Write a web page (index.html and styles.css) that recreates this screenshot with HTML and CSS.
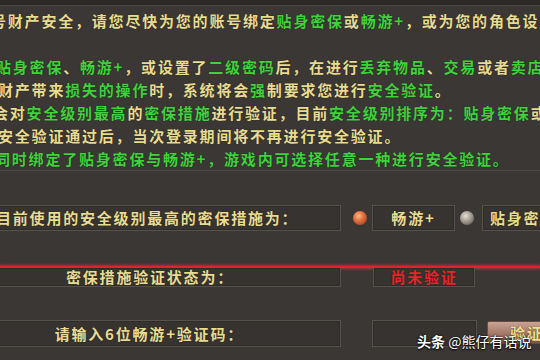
FILE: index.html
```html
<!DOCTYPE html>
<html lang="zh-CN">
<head>
<meta charset="utf-8">
<title>安全验证</title>
<link rel="stylesheet" href="styles.css">
</head>
<body>
<div class="screen">
  <div class="topbar"></div>
  <div class="notice">
    <p class="ln l1">号财产安全，请您尽快为您的账号绑定<span class="g">贴身密保</span>或<span class="g">畅游+</span>，或为您的角色设置</p>
    <p class="ln blank"></p>
    <p class="ln l2"><span class="g">贴身密保</span>、<span class="g">畅游+</span>，或设置了<span class="g">二级密码</span>后，在进行<span class="g">丢弃物品</span>、<span class="g">交易</span>或者<span class="g">卖店</span>等</p>
    <p class="ln l3">财产带来<span class="g">损失的操作</span>时，系统将会<span class="g">强</span>制要求您进行<span class="g">安全验证</span>。</p>
    <p class="ln l4">会对<span class="g">安全级别最高</span>的<span class="g">密保措施</span>进行验证，目前<span class="g">安全级别排序为：贴身密保</span>或</p>
    <p class="ln l5">安全验证通过后，当次登录期间将不再进行安全验证。</p>
    <p class="ln l6 g">同时绑定了贴身密保与畅游+，游戏内可选择任意一种进行安全验证。</p>
  </div>
  <div class="divider"></div>
  <div class="form">
    <div class="row r1">
      <div class="field wide label-left">目前使用的安全级别最高的密保措施为：</div>
      <span class="ball orange"></span>
      <div class="field opt">畅游+</div>
      <span class="ball gray"></span>
      <div class="field opt2">贴身密保</div>
    </div>
    <div class="redline"></div>
    <div class="row r2">
      <div class="field wide label-right notop">密保措施验证状态为：</div>
      <div class="field status notop">尚未验证</div>
    </div>
    <div class="row r3">
      <div class="field wide label-right">请输入6位畅游+验证码：</div>
      <div class="field input"></div>
      <div class="btn">验证</div>
    </div>
  </div>
  <div class="watermark"><b>头条</b> @熊仔有话说</div>
</div>
</body>
</html>
```

FILE: styles.css
```css
html, body {
  margin: 0;
  padding: 0;
  background: #3b3735;
}

.screen {
  position: relative;
  width: 540px;
  height: 360px;
  overflow: hidden;
  background: #3b3735;
  font-family: "Noto Sans CJK SC", "Noto Sans", sans-serif;
  color: #e8dc90;
}

.topbar {
  height: 5px;
  background: #2c2a29;
  border-bottom: 1px solid #4a4643;
}

.notice {
  padding-top: 3px;
}

.ln {
  margin: 0;
  height: 23px;
  line-height: 23px;
  white-space: nowrap;
  font-size: 15px;
  font-weight: 700;
  letter-spacing: 1.8px;
  color: #e8dc90;
  text-shadow: 0 0 1px #1a1816;
}

.g {
  color: #3fd23b;
}

.l1 { margin-left: -9px; }
.l2 { margin-left: -4px; }
.l3 { margin-left: -2px; }
.l4 { margin-left: -7px; }
.l5 { margin-left: -2px; }
.l6 { margin-left: -5px; }

.divider {
  height: 1px;
  background: #4d4946;
}

.form {
  margin-top: 34px;
}

.row {
  display: flex;
  align-items: center;
}

.field {
  flex: none;
  box-sizing: border-box;
  border: 1px solid #57514c;
  background: #373331;
  box-shadow: inset 0 0 0 1px #2f2c2a;
  font-size: 15px;
  font-weight: 700;
  letter-spacing: 1.8px;
  white-space: nowrap;
  overflow: hidden;
  color: #e8dc90;
  text-shadow: 0 0 1px #1a1816;
}

.notop {
  border-top: none;
}

.r1 {
  height: 26px;
}

.r1 .field {
  height: 26px;
  line-height: 24px;
}

.wide {
  margin-left: -10px;
  width: 351px;
}

.label-left {
  padding-left: 5px;
}

.label-right {
  text-align: right;
}

.r2 .label-right {
  padding-right: 106px;
}

.r3 .label-right {
  padding-right: 96px;
}

.ball {
  width: 14px;
  height: 14px;
  border-radius: 50%;
  flex: none;
}

.orange {
  margin-left: 12px;
  background: radial-gradient(circle at 40% 35%, #ffb88a 0, #e2703c 40%, #8a3418 100%);
}

.gray {
  margin-left: 5px;
  background: radial-gradient(circle at 40% 35%, #e6ddd3 0, #a39a91 45%, #4a4440 100%);
}

.opt {
  margin-left: 5px;
  width: 83px;
  text-align: center;
}

.opt2 {
  margin-left: 8px;
  width: 90px;
  padding-left: 7px;
}

.redline {
  margin-top: 35px;
  height: 2px;
  background: #e4202c;
  box-shadow: 0 0 3px 1px rgba(255, 60, 80, 0.55);
}

.r2 {
  height: 19px;
}

.r2 .field {
  height: 19px;
  line-height: 17px;
}

.status {
  margin-left: 32px;
  width: 102px;
  text-align: center;
  color: #e8262a;
}

.r3 {
  margin-top: 33px;
  height: 27px;
  align-items: flex-start;
}

.r3 .field {
  height: 27px;
  line-height: 25px;
}

.input {
  margin-left: 31px;
  width: 105px;
}

.btn {
  margin-left: 10px;
  margin-top: 1px;
  width: 75px;
  height: 23px;
  flex: none;
  box-sizing: border-box;
  padding-left: 22px;
  border: 1px solid #6b4b40;
  border-radius: 2px;
  background: linear-gradient(#caa496, #a57868 55%, #7c5446);
  font-size: 15px;
  font-weight: 700;
  letter-spacing: 1.8px;
  line-height: 21px;
  white-space: nowrap;
  overflow: hidden;
  color: #f0df8e;
  text-shadow: 0 0 1px #3a2218;
}

.watermark {
  position: absolute;
  left: 417px;
  top: 331px;
  font-size: 14px;
  line-height: 20px;
  color: #ffffff;
  white-space: nowrap;
  text-shadow: 0 0 2px #000, 0 1px 2px #000;
}

.watermark b {
  font-weight: 700;
}
```
